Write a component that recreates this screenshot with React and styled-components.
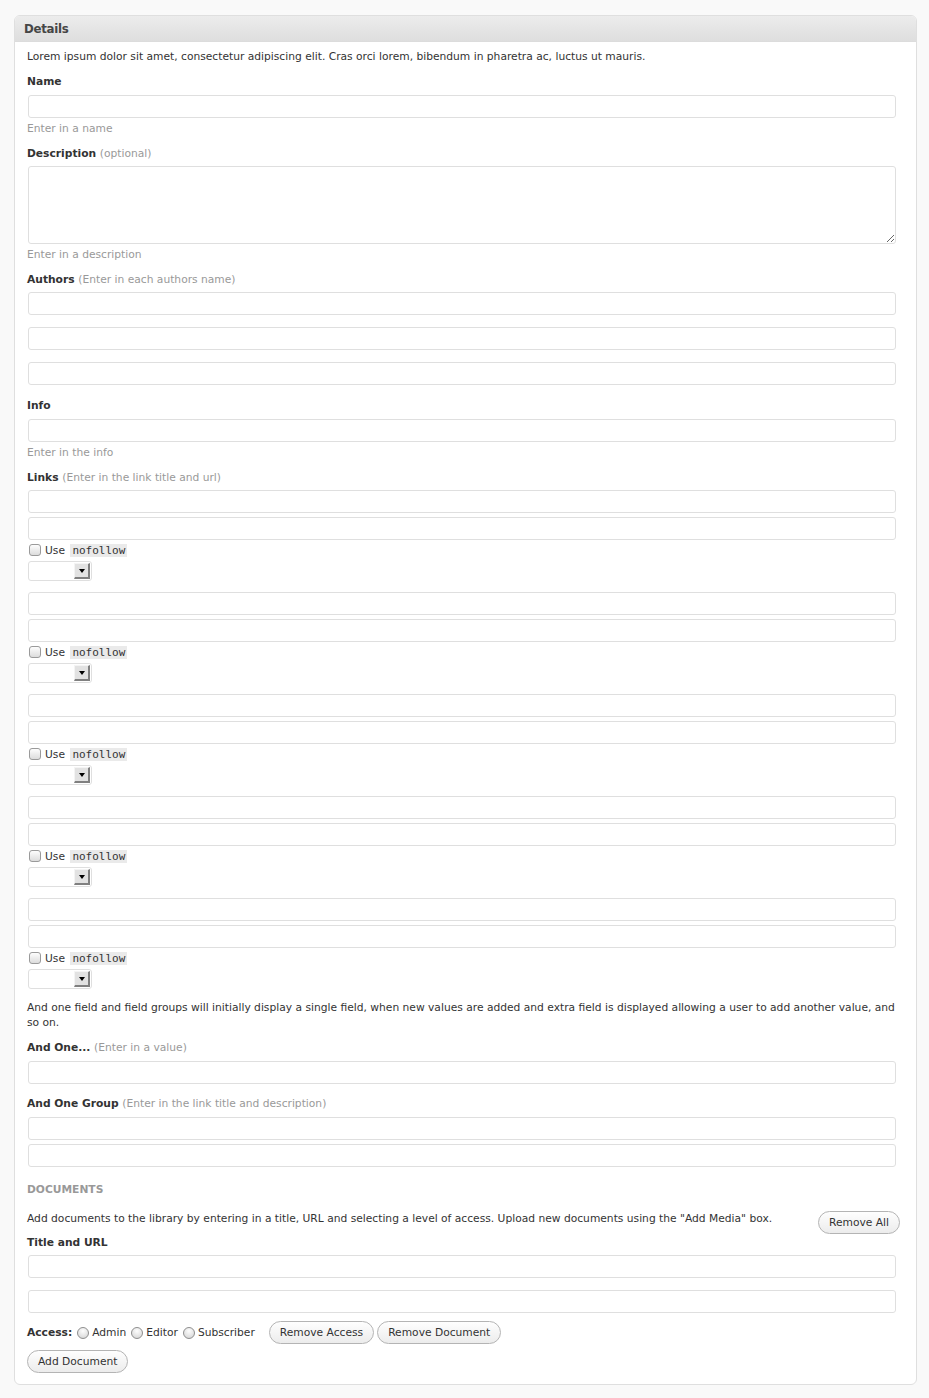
import React from 'react';
import styled, { createGlobalStyle } from 'styled-components';

const GlobalStyle = createGlobalStyle`
  body {
    margin: 0;
    background: #f9f9f9;
    font-family: "DejaVu Sans", Verdana, sans-serif;
    font-size: 10.7px;
    color: #333;
  }
`;

const Page = styled.div`
  padding: 15px 12px 13px 14px;
`;

const Panel = styled.div`
  border: 1px solid #dfdfdf;
  border-radius: 6px;
  background: #fff;
  overflow: hidden;
`;

const PanelHeader = styled.h3`
  margin: 0;
  height: 25px;
  line-height: 27px;
  padding: 0 9px;
  font-size: 11.8px;
  letter-spacing: -0.3px;
  font-weight: bold;
  color: #464646;
  background: linear-gradient(to bottom, #ececec, #dedede);
  border-bottom: 1px solid #dcdcdc;
`;

const PanelBody = styled.div`
  padding: 7px 16px 11px 12px;
`;

const Text = styled.p`
  margin: ${(p) => p.mt || 0}px 0 0;
  line-height: 15px;
  color: #333;
`;

const Label = styled.div`
  margin: ${(p) => p.mt ?? 9}px 0 ${(p) => p.mb ?? 5}px;
  line-height: 16px;
  font-weight: bold;
  color: #333;
`;

const Hint = styled.span`
  font-weight: normal;
  color: #999;
`;

const Help = styled.div`
  margin-top: 3px;
  line-height: 16px;
  color: #999;
`;

const Input = styled.input`
  display: block;
  box-sizing: border-box;
  width: calc(100% - 5px);
  height: 23px;
  margin: ${(p) => p.mt || 0}px 0 0 1px;
  border: 1px solid #dfdfdf;
  border-radius: 3px;
  background: #fff;
  outline: none;
`;

const TextArea = styled.textarea`
  display: block;
  box-sizing: border-box;
  width: calc(100% - 5px);
  height: 78px;
  margin: 0 0 0 1px;
  border: 1px solid #dfdfdf;
  border-radius: 3px;
  resize: vertical;
  outline: none;
`;

const LinkGroup = styled.div`
  margin-top: ${(p) => (p.first ? 0 : 11)}px;
`;

const CheckRow = styled.label`
  display: flex;
  align-items: center;
  height: 16px;
  margin: 2px 0 0 2px;
  gap: 4px;
`;

const Check = styled.span`
  display: inline-block;
  box-sizing: border-box;
  width: 12px;
  height: 12px;
  border: 1px solid #9a9a9a;
  border-radius: 3px;
  background: linear-gradient(to bottom, #fdfdfd, #dcdcdc);
`;

const Code = styled.code`
  font-family: "DejaVu Sans Mono", "Liberation Mono", monospace;
  font-size: 11px;
  line-height: 15px;
  padding: 0 2px;
  margin-left: 2px;
  background: #eaeaea;
  color: #333;
`;

const Select = styled.div`
  display: flex;
  justify-content: flex-end;
  align-items: center;
  box-sizing: border-box;
  width: 64px;
  height: 20px;
  margin: 3px 0 0 1px;
  padding-right: 1px;
  border: 1px solid #dfdfdf;
  border-radius: 3px;
  background: #fff;
`;

const SelectArrow = styled.span`
  display: flex;
  align-items: center;
  justify-content: center;
  box-sizing: border-box;
  width: 16px;
  height: 16px;
  border-top: 1px solid #f4f4f4;
  border-left: 1px solid #f4f4f4;
  border-right: 2px solid #808080;
  border-bottom: 2px solid #808080;
  background: #e2e2e2;
  &::after {
    content: '';
    border-left: 3px solid transparent;
    border-right: 3px solid transparent;
    border-top: 4px solid #000;
  }
`;

const SectionTitle = styled.div`
  margin: 15px 0 13px;
  line-height: 16px;
  font-weight: bold;
  color: #999;
`;

const DocRow = styled.div`
  display: flex;
  justify-content: space-between;
  align-items: flex-start;
`;

const Button = styled.button`
  box-sizing: border-box;
  height: 23px;
  margin-top: ${(p) => p.mt || 0}px;
  padding: 0 10px;
  border: 1px solid #b4b4b4;
  border-radius: 12px;
  background: linear-gradient(to bottom, #fefefe, #ececec);
  font-family: inherit;
  font-size: 10.7px;
  color: #333;
  white-space: nowrap;
`;

const AccessRow = styled.div`
  display: flex;
  align-items: center;
  margin-top: 8px;
  gap: 3px;
`;

const Radio = styled.span`
  display: inline-block;
  box-sizing: border-box;
  width: 12px;
  height: 12px;
  margin-left: 2px;
  border: 1px solid #8e8e8e;
  border-radius: 50%;
  background: radial-gradient(circle at 50% 30%, #fdfdfd, #d2d2d2);
`;

const Buttons = styled.div`
  display: flex;
  gap: 3px;
  margin-left: 11px;
`;

const Strong = styled.b`
  font-weight: bold;
`;

const LinkFields = () => (
  <>
    {[0, 1, 2, 3, 4].map((i) => (
      <LinkGroup key={i} first={i === 0}>
        <Input />
        <Input mt={4} />
        <CheckRow>
          <Check />
          <span>
            Use <Code>nofollow</Code>
          </span>
        </CheckRow>
        <Select>
          <SelectArrow />
        </Select>
      </LinkGroup>
    ))}
  </>
);

export default function App() {
  return (
    <Page>
      <GlobalStyle />
      <Panel>
        <PanelHeader>Details</PanelHeader>
        <PanelBody>
          <Text>
            Lorem ipsum dolor sit amet, consectetur adipiscing elit. Cras orci lorem, bibendum in
            pharetra ac, luctus ut mauris.
          </Text>

          <Label mt={10}>Name</Label>
          <Input />
          <Help>Enter in a name</Help>

          <Label mb={4}>
            Description <Hint>(optional)</Hint>
          </Label>
          <TextArea />
          <Help>Enter in a description</Help>

          <Label mb={4}>
            Authors <Hint>(Enter in each authors name)</Hint>
          </Label>
          <Input />
          <Input mt={12} />
          <Input mt={12} />

          <Label mt={13}>Info</Label>
          <Input />
          <Help>Enter in the info</Help>

          <Label mb={4}>
            Links <Hint>(Enter in the link title and url)</Hint>
          </Label>
          <LinkFields />

          <Text mt={11}>
            And one field and field groups will initially display a single field, when new values
            are added and extra field is displayed allowing a user to add another value, and so on.
          </Text>

          <Label mt={10}>
            And One... <Hint>(Enter in a value)</Hint>
          </Label>
          <Input />

          <Label mt={12}>
            And One Group <Hint>(Enter in the link title and description)</Hint>
          </Label>
          <Input />
          <Input mt={4} />

          <SectionTitle>DOCUMENTS</SectionTitle>
          <DocRow>
            <Text>
              Add documents to the library by entering in a title, URL and selecting a level of
              access. Upload new documents using the "Add Media" box.
            </Text>
            <Button>Remove All</Button>
          </DocRow>

          <Label mt={1} mb={4}>
            Title and URL
          </Label>
          <Input />
          <Input mt={12} />

          <AccessRow>
            <Strong>Access:</Strong>
            <Radio /> Admin
            <Radio /> Editor
            <Radio /> Subscriber
            <Buttons>
              <Button>Remove Access</Button>
              <Button>Remove Document</Button>
            </Buttons>
          </AccessRow>
          <Button mt={6}>Add Document</Button>
        </PanelBody>
      </Panel>
    </Page>
  );
}
